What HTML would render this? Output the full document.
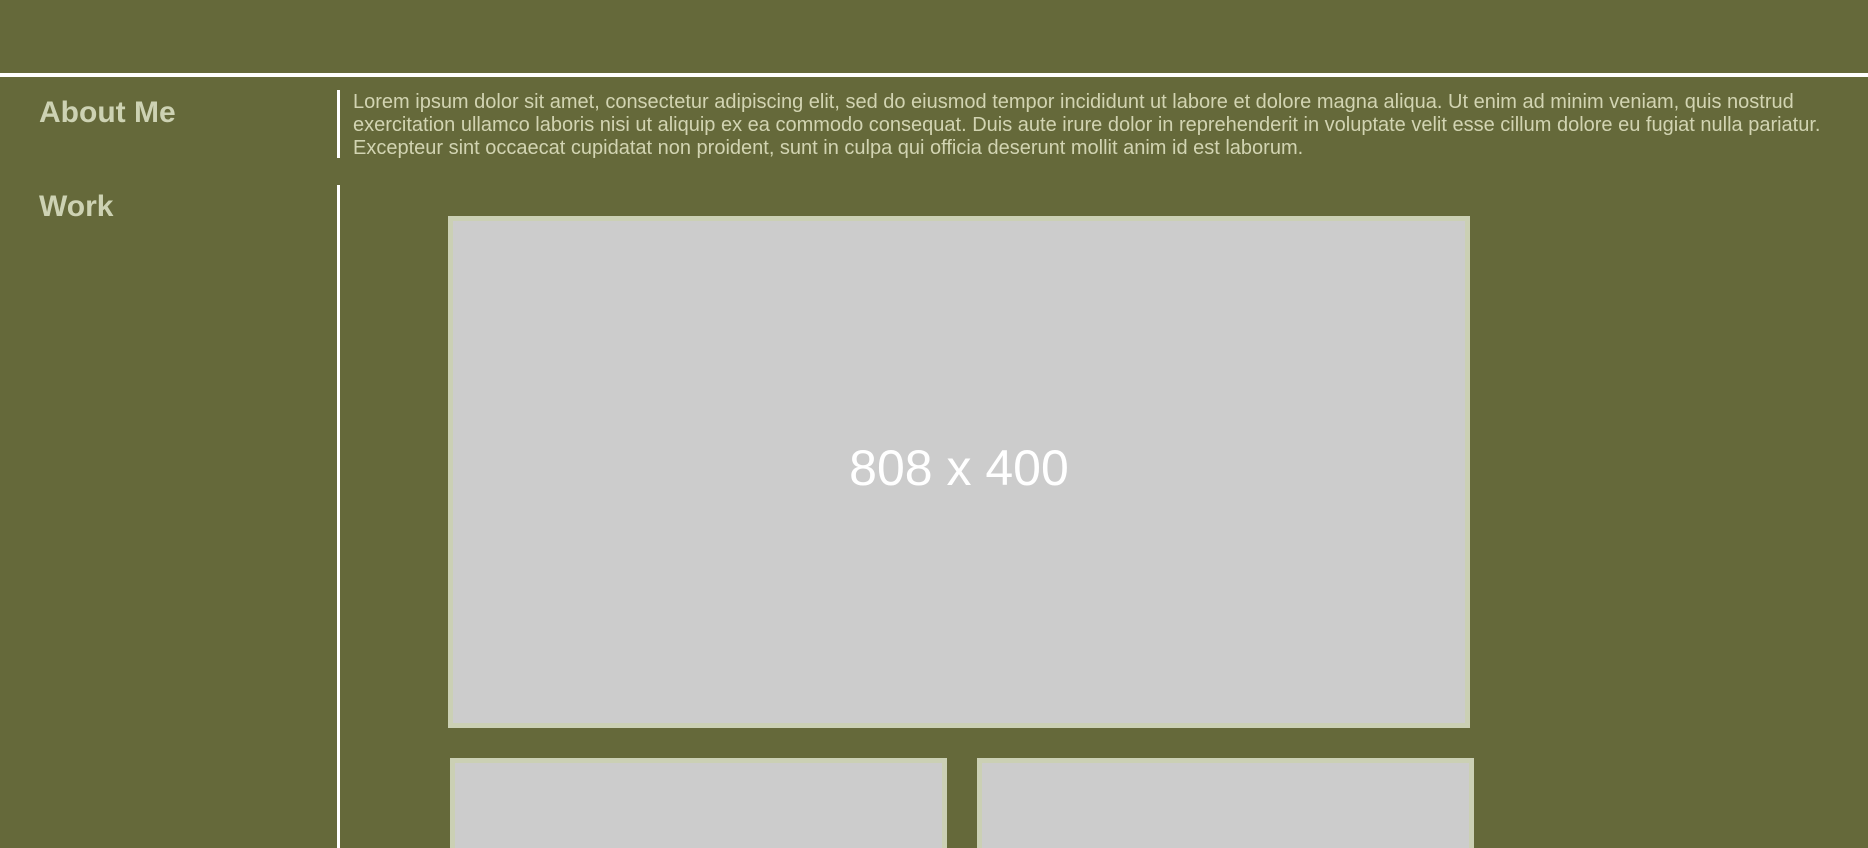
<!DOCTYPE html>
<html><head><meta charset="utf-8"><style>
html,body{margin:0;padding:0;width:1868px;height:848px;overflow:hidden;background:#65693a;font-family:"Liberation Sans",Arial,sans-serif;color:#cdd2b3;position:relative}
.hr{position:absolute;left:0;top:73px;width:1868px;height:4px;background:#fff}
h2{position:absolute;margin:0;font-size:30px;font-weight:bold;left:39px;line-height:34px}
.vl{position:absolute;left:337px;width:3px;background:#fff}
p{position:absolute;left:353px;top:91px;margin:0;font-size:20px;line-height:23px;width:1510px;color:#d2d4b2;white-space:nowrap}
.img{position:absolute;background:#cccccc;border:5px solid #cbd0b4;box-sizing:border-box;display:flex;align-items:center;justify-content:center;color:#fff;font-size:50px}
</style></head><body>
<div class="hr"></div>
<h2 style="top:96px">About Me</h2>
<div class="vl" style="top:90px;height:68px"></div>
<p>Lorem ipsum dolor sit amet, consectetur adipiscing elit, sed do eiusmod tempor incididunt ut labore et dolore magna aliqua. Ut enim ad minim veniam, quis nostrud<br>exercitation ullamco laboris nisi ut aliquip ex ea commodo consequat. Duis aute irure dolor in reprehenderit in voluptate velit esse cillum dolore eu fugiat nulla pariatur.<br>Excepteur sint occaecat cupidatat non proident, sunt in culpa qui officia deserunt mollit anim id est laborum.</p>
<h2 style="top:190px">Work</h2>
<div class="vl" style="top:185px;height:663px"></div>
<div class="img" style="left:448px;top:216px;width:1022px;height:512px"><span style="position:relative;top:-4px">808 x 400</span></div>
<div class="img" style="left:450px;top:758px;width:497px;height:120px"></div>
<div class="img" style="left:977px;top:758px;width:497px;height:120px"></div>
</body></html>
